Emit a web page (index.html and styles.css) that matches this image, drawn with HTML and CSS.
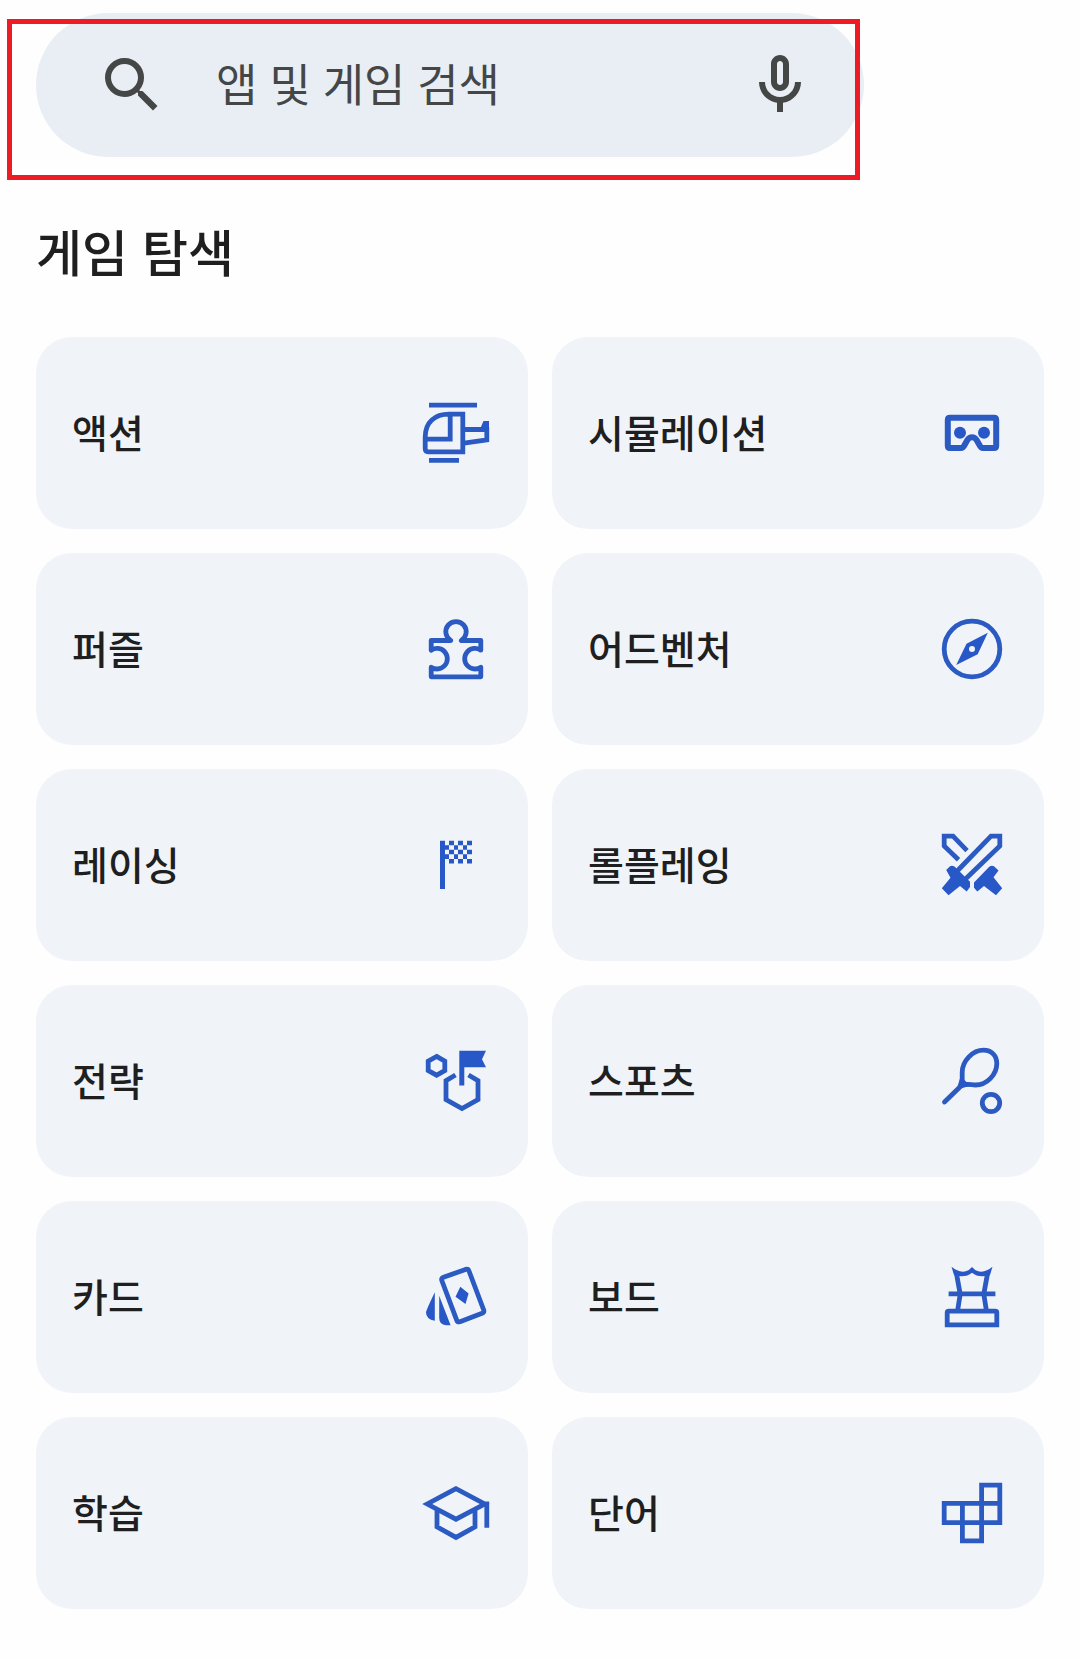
FILE: index.html
```html
<!DOCTYPE html>
<html lang="ko">
<head>
<meta charset="utf-8">
<title>게임 탐색</title>
<link rel="stylesheet" href="styles.css">
</head>
<body>
<main class="page">
  <div class="search">
    <svg class="search-icon" viewBox="0 0 24 24"><path d="M15.5 14h-.79l-.28-.27A6.471 6.471 0 0 0 16 9.5 6.5 6.5 0 1 0 9.5 16c1.61 0 3.09-.59 4.23-1.57l.27.28v.79l5 4.99L20.49 19l-4.99-5zm-6 0C7.01 14 5 11.99 5 9.5S7.01 5 9.5 5 14 7.01 14 9.5 11.99 14 9.5 14z"/></svg>
    <span class="search-text">앱 및 게임 검색</span>
    <svg class="search-icon" viewBox="0 0 24 24"><path fill-rule="evenodd" d="M12 14c1.66 0 3-1.34 3-3V5c0-1.66-1.34-3-3-3S9 3.34 9 5v6c0 1.66 1.34 3 3 3zM11 5c0-.55.45-1 1-1s1 .45 1 1v6c0 .55-.45 1-1 1s-1-.45-1-1V5zM17 11c0 2.76-2.24 5-5 5s-5-2.24-5-5H5c0 3.53 2.61 6.43 6 6.92V21h2v-3.08c3.39-.49 6-3.39 6-6.92h-2z"/></svg>
    <div class="highlight"></div>
  </div>

  <h1 class="title">게임 탐색</h1>

  <div class="grid">
    <div class="card"><span class="label">액션</span>
      <svg class="icon" viewBox="0 0 72 72"><path d="M9 8.2H57M9 63.4H39M42.8 17.2V54.8H8.2Q5.2 54.8 5.2 51.5V40C5.2 25 15 17.2 29 17.2ZM30.2 17.2V42.2H5.2M44 32.5H66.8V43L44 46.2"/><path class="solid" d="M60.5 31L63.5 24H69V33H60.5Z"/></svg></div>
    <div class="card"><span class="label">시뮬레이션</span>
      <svg class="icon" viewBox="0 0 72 72"><path class="thick" d="M14 20.7H58Q60.2 20.7 60.2 23V48.7Q60.2 51 58 51H47Q45 51 44 49L40.5 42.8Q38.8 40.2 36 40.2T31.5 42.8L28 49Q27 51 25 51H14Q11.8 51 11.8 48.7V23Q11.8 20.7 14 20.7Z"/><circle class="solid" cx="24" cy="35.7" r="6"/><circle class="solid" cx="48" cy="35.7" r="6"/></svg></div>

    <div class="card"><span class="label">퍼즐</span>
      <svg class="icon" viewBox="0 0 72 72"><path class="round" d="M11.2 37.2V27.5H30.8A10.2 10.2 0 1 1 41.2 27.5H60.8V37.2A10.3 10.3 0 1 0 60.8 54.2V63.8H11.2V54.2A10.3 10.3 0 1 0 11.2 37.2Z"/></svg></div>
    <div class="card"><span class="label">어드벤처</span>
      <svg class="icon" viewBox="0 0 72 72"><circle cx="36" cy="36" r="27.8"/><path class="solid" fill-rule="evenodd" d="M51.8 19.8L41.7 41.3L20.2 52L30.5 30.8ZM36 33A3 3 0 1 0 36 39A3 3 0 1 0 36 33Z"/></svg></div>

    <div class="card"><span class="label">레이싱</span>
      <svg class="icon" viewBox="0 0 72 72"><path class="solid" d="M20 11.7h5v48.3h-5zM29 11.7h5v4.6h-5zM38 11.7h5v4.6h-5zM47 11.7h5v4.6h-5zM25 16.3h4v4.5h-4zM34 16.3h4v4.5h-4zM43 16.3h4v4.5h-4zM29 20.8h5v4.5h-5zM38 20.8h5v4.5h-5zM47 20.8h5v4.5h-5zM25 25.3h4v4.6h-4zM34 25.3h4v4.6h-4zM43 25.3h4v4.6h-4zM29 29.9h5v4.6h-5zM38 29.9h5v4.6h-5zM47 29.9h5v4.6h-5z"/></svg></div>
    <div class="card"><span class="label">롤플레잉</span>
      <svg class="icon" viewBox="0 0 72 72"><path d="M22.5 30.8L8.2 17V7.2H17L31 21.7M21.7 41.5L55 7.2H63.8V17L29.5 50"/><path class="solid" d="M10.2 41L14 37.2Q16 36 18.5 37.5L34 52.7V58L30.7 62.5L24 57L12.5 66.2L5.8 59.3L14.5 48.7ZM38 53.5L53 38Q55.5 36 58 37.3L62.5 41.5L57.5 48.2L66.2 59.3L60 66.2L48 57L41.3 62.5L38 58.7Z"/></svg></div>

    <div class="card"><span class="label">전략</span>
      <svg class="icon" viewBox="0 0 72 72"><path d="M16.6 11.4L24.8 16.2V25.5L16.6 30.2L8.2 25.5V16.2ZM35.5 30L26 35.6V54.5L42 63.6L58 54.5V35.6L48.5 30"/><path class="solid" d="M39.3 5.8H66L62 14.2L66 22.3H44.3V40.5H39.3Z"/></svg></div>
    <div class="card"><span class="label">스포츠</span>
      <svg class="icon" viewBox="0 0 72 72"><path d="M26.2 40V27.5C26.2 15.5 37 5.2 47.5 5.2C55.5 5.2 60.8 10.5 60.8 18.5C60.8 29.5 51 40 39.5 40C35 40 33 38.5 26.2 40"/><path class="round" d="M8.5 57L26 40"/><path class="solid" d="M25 30Q28 36.5 36 40.5L26 43L21.5 41.5Z"/><circle cx="55" cy="58" r="8.7"/></svg></div>

    <div class="card"><span class="label">카드</span>
      <svg class="icon" viewBox="0 0 72 72"><path class="round" d="M23.5 16.3L45.5 8.4Q48.2 7.6 49 10L63.7 49Q64.4 51.3 62.1 52.3L40 60.7Q37.5 61.5 36.7 59.2L21.8 19.5Q21.2 17.1 23.5 16.3Z"/><path class="solid" d="M40.3 25.7L48.6 32.5L45.5 43L35.5 35.7ZM14.8 31.3V59.7Q6 58.5 6 51.3Q6.5 48.5 14.8 31.3ZM19.2 34.7L30.6 64.2H26Q19.2 63.5 19.2 57Z"/></svg></div>
    <div class="card"><span class="label">보드</span>
      <svg class="icon" viewBox="0 0 72 72"><path d="M21.7 49L24.2 33L20 10M50.3 49L47.8 33L52 10M12.6 32.9H59.4M11.2 63.8V51.5Q11.2 50.2 12.8 50.2H59.2Q60.8 50.2 60.8 51.5V63.8Z"/><path class="solid" d="M15.5 5.7Q24 12.5 30.5 10Q33.5 9 36 6Q38.5 9 41.5 10Q48 12.5 56.5 5.7L54 14Q43 17.5 36 11.8Q29 17.5 18 14Z"/></svg></div>

    <div class="card"><span class="label">학습</span>
      <svg class="icon" viewBox="0 0 72 72"><path d="M36 11.6L7.3 27L36 42.2L64.7 27ZM17 31V49.8L36 60.4L55 49.8V31M64.5 27H66.8V50.7"/></svg></div>
    <div class="card"><span class="label">단어</span>
      <svg class="icon" viewBox="0 0 72 72"><path d="M45.6 26.4V8.2H63.8V45.6H8.2V26.4H63.8M26.4 26.4V63.8H45.6V26.4"/></svg></div>
  </div>
</main>
</body>
</html>
```
FILE: styles.css
```css
* { box-sizing: border-box; }
body {
  margin: 0;
  background: #fefefe;
  color: #1f1f1f;
  font-family: "Noto Sans CJK KR", sans-serif;
  font-weight: 500;
}
.page { padding: 13px 36px 50px; }
.search {
  position: relative;
  display: flex;
  align-items: center;
  width: 828px;
  height: 144px;
  padding: 0 48px 0 60px;
  border-radius: 72px;
  background: #e9eef5;
}
.search-icon { width: 72px; height: 72px; fill: #444746; }
.search-text {
  flex: 1;
  margin-left: 48px;
  padding-bottom: 5px;
  color: #444746;
  font-size: 45px;
  font-weight: 400;
  letter-spacing: -0.3px;
  line-height: 72px;
  white-space: nowrap;
}
/* Outline drawn over the search bar */
.highlight {
  position: absolute;
  left: -29px;
  top: 6px;
  width: 853px;
  height: 161px;
  border: 5px solid #ed1c24;
}
.title {
  margin: 57px 0 51px;
  font-size: 50px;
  font-weight: 500;
  line-height: 72px;
}
.grid {
  display: grid;
  grid-template-columns: 1fr 1fr;
  grid-auto-rows: 192px;
  gap: 24px;
}
.card {
  display: flex;
  align-items: center;
  justify-content: space-between;
  padding: 0 36px;
  border-radius: 36px;
  background: #f0f4f9;
}
.label { padding-bottom: 4px; font-size: 39px; line-height: 60px; }
.icon {
  width: 72px;
  height: 72px;
  fill: none;
  stroke: #2a5ac2;
  stroke-width: 4.8;
}
.thick { stroke-width: 6; }
.round { stroke-linejoin: round; stroke-linecap: round; }
.solid { fill: #2857c8; stroke: none; }
```
